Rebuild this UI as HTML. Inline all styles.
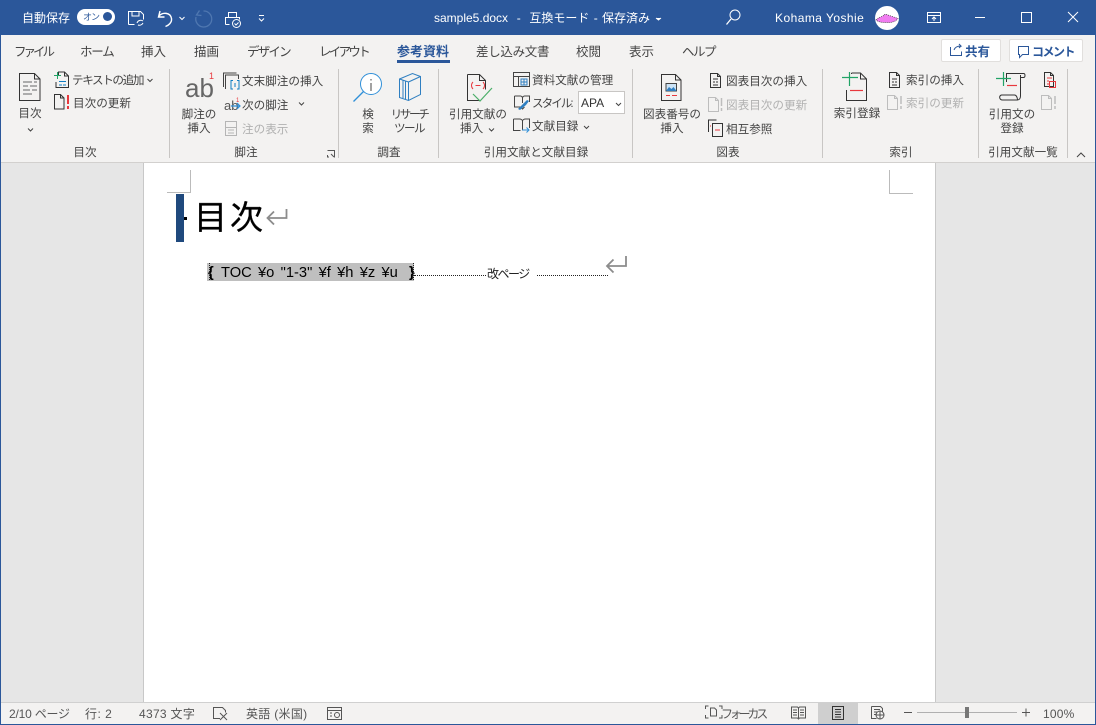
<!DOCTYPE html>
<html lang="ja"><head><meta charset="utf-8"><title>sample5.docx</title>
<style>
html,body{margin:0;padding:0}
body{width:1096px;height:725px;overflow:hidden;position:relative;background:#e6e6e6;font-family:"Liberation Sans","Noto Sans CJK JP",sans-serif;font-size:11.6px;color:#444}
div{position:absolute}
.t{white-space:nowrap;line-height:16px;height:16px}
.c{text-align:center;transform:translateX(-50%)}
.w{color:#fff;font-size:12px}
.g{color:#b1b1b1}
.k{color:#555;font-size:12px}
.b{font-size:12.5px}
svg{position:absolute;left:0;top:0}
</style></head><body>
<div style="left:0;top:0;width:1096px;height:35px;background:#2b579a"></div>
<div style="left:1px;top:35px;width:1094px;height:127px;background:#f3f2f1"></div>
<div style="left:0;top:162px;width:1096px;height:1px;background:#d2d0ce"></div>
<div style="left:143px;top:163px;width:793px;height:539px;background:#fff;border-left:1px solid #c8c8c8;border-right:1px solid #c8c8c8;box-sizing:border-box"></div>
<div style="left:1px;top:702px;width:1094px;height:22px;background:#f3f2f1;border-top:1px solid #d0d0d0;box-sizing:border-box"></div>
<div style="left:818px;top:703px;width:40px;height:21px;background:#cfcfcf"></div>
<div style="left:0;top:35px;width:1px;height:690px;background:#2b579a"></div>
<div style="left:1095px;top:35px;width:1px;height:690px;background:#2b579a"></div>
<div style="left:0;top:724px;width:1096px;height:1px;background:#2b579a"></div>

<!-- title bar text -->
<div class="t w" style="left:22px;top:10px">自動保存</div>
<div style="left:77px;top:9px;width:38px;height:16px;border-radius:8px;background:#fff"></div>
<div class="t" style="left:83px;top:9px;font-size:9px;color:#2b579a;letter-spacing:-1px">オン</div>
<div style="left:103px;top:12px;width:9px;height:9px;border-radius:50%;background:#2b579a"></div>
<div class="t w" style="left:434px;top:10px;word-spacing:1px">sample5.docx&nbsp; - &nbsp;互換モード - 保存済み</div>
<div class="t w" style="left:775px;top:10px;letter-spacing:.45px">Kohama Yoshie</div>

<!-- tabs -->
<div class="t b" style="left:14px;top:44px;letter-spacing:-3px">ファイル</div>
<div class="t b" style="left:80px;top:44px;letter-spacing:-1.2px">ホーム</div>
<div class="t b" style="left:141px;top:44px">挿入</div>
<div class="t b" style="left:194px;top:44px">描画</div>
<div class="t b" style="left:247px;top:44px;letter-spacing:-1.8px">デザイン</div>
<div class="t b" style="left:319px;top:44px;letter-spacing:-2.7px">レイアウト</div>
<div class="t" style="left:397px;top:44px;color:#2b579a;font-weight:bold;font-size:13px">参考資料</div>
<div style="left:397px;top:60px;width:53px;height:3px;background:#2b579a"></div>
<div class="t b" style="left:476px;top:44px;letter-spacing:-.3px">差し込み文書</div>
<div class="t b" style="left:576px;top:44px">校閲</div>
<div class="t b" style="left:629px;top:44px">表示</div>
<div class="t b" style="left:682px;top:44px;letter-spacing:-1.5px">ヘルプ</div>

<!-- share / comment -->
<div style="left:941px;top:39px;width:60px;height:23px;background:#fff;border:1px solid #e1dfdd;box-sizing:border-box;border-radius:2px"></div>
<div style="left:1009px;top:39px;width:74px;height:23px;background:#fff;border:1px solid #e1dfdd;box-sizing:border-box;border-radius:2px"></div>
<div class="t" style="left:965px;top:44px;color:#2b579a;font-weight:bold;font-size:12.5px">共有</div>
<div class="t" style="left:1032px;top:44px;color:#2b579a;font-weight:bold;font-size:12px;letter-spacing:-1.5px">コメント</div>

<!-- ribbon labels -->
<div class="t c" style="left:30px;top:106px">目次</div>
<div class="t" style="left:72px;top:73px;letter-spacing:-1.4px">テキストの追加</div>
<div class="t" style="left:73px;top:96px">目次の更新</div>
<div class="t c" style="left:85px;top:145px">目次</div>

<div class="t c" style="left:199px;top:107px">脚注の</div>
<div class="t c" style="left:199px;top:121px">挿入</div>
<div class="t" style="left:242px;top:74px">文末脚注の挿入</div>
<div class="t" style="left:242px;top:98px">次の脚注</div>
<div class="t g" style="left:242px;top:122px">注の表示</div>
<div class="t c" style="left:246px;top:145px">脚注</div>

<div class="t c" style="left:368px;top:107px">検</div>
<div class="t c" style="left:368px;top:121px">索</div>
<div class="t c" style="left:409px;top:107px;letter-spacing:-2.4px">リサーチ</div>
<div class="t c" style="left:409px;top:121px;letter-spacing:-1.6px">ツール</div>
<div class="t c" style="left:389px;top:145px">調査</div>

<div class="t c" style="left:478px;top:107px">引用文献の</div>
<div class="t" style="left:460px;top:121px">挿入</div>
<div class="t" style="left:532px;top:73px">資料文献の管理</div>
<div class="t" style="left:532px;top:96px;letter-spacing:-2px">スタイル:</div>
<div style="left:578px;top:91px;width:47px;height:23px;background:#fff;border:1px solid #c8c6c4;box-sizing:border-box"></div>
<div class="t" style="left:581px;top:95px;color:#333;font-size:12px">APA</div>
<div class="t" style="left:532px;top:119px">文献目録</div>
<div class="t c" style="left:536px;top:145px">引用文献と文献目録</div>

<div class="t c" style="left:672px;top:107px">図表番号の</div>
<div class="t c" style="left:672px;top:121px">挿入</div>
<div class="t" style="left:726px;top:74px">図表目次の挿入</div>
<div class="t g" style="left:726px;top:98px">図表目次の更新</div>
<div class="t" style="left:726px;top:122px">相互参照</div>
<div class="t c" style="left:728px;top:145px">図表</div>

<div class="t c" style="left:857px;top:106px">索引登録</div>
<div class="t" style="left:906px;top:73px">索引の挿入</div>
<div class="t g" style="left:906px;top:96px">索引の更新</div>
<div class="t c" style="left:901px;top:145px">索引</div>

<div class="t c" style="left:1012px;top:107px">引用文の</div>
<div class="t c" style="left:1012px;top:121px">登録</div>
<div class="t c" style="left:1023px;top:145px">引用文献一覧</div>

<!-- document -->
<div class="t" style="left:194px;top:196px;font-size:33px;line-height:44px;height:44px;color:#000;letter-spacing:3px;-webkit-text-stroke:.3px #000">目次</div>
<div style="left:207px;top:263px;width:207px;height:18px;background:#bfbfbf"></div>
<div class="t" style="left:208px;top:265px;font-size:14.7px;color:#000;font-weight:bold">{</div>
<div class="t" style="left:221px;top:265px;font-size:14.7px;color:#000;word-spacing:2.2px">TOC ¥o "1-3" ¥f ¥h ¥z ¥u</div>
<div class="t" style="left:409px;top:265px;font-size:14.7px;color:#000;font-weight:bold">}</div>
<div style="left:414px;top:275px;width:72px;height:0;border-top:1px dotted #222"></div>
<div class="t" style="left:487px;top:266px;font-size:12px;color:#222;letter-spacing:-1.5px">改ページ</div>
<div style="left:537px;top:275px;width:71px;height:0;border-top:1px dotted #222"></div>

<!-- status bar -->
<div class="t k" style="left:9px;top:706px;letter-spacing:-.2px">2/10 ページ</div>
<div class="t k" style="left:85px;top:706px;letter-spacing:.5px">行: 2</div>
<div class="t k" style="left:139px;top:706px;letter-spacing:.3px">4373 文字</div>
<div class="t k" style="left:246px;top:706px;letter-spacing:.3px">英語 (米国)</div>
<div class="t k" style="left:721px;top:706px;letter-spacing:-3.2px">フォーカス</div>
<div class="t k" style="left:1043px;top:706px;letter-spacing:.2px">100%</div>

<svg width="1096" height="725" viewBox="0 0 1096 725" fill="none" stroke-width="1">
<!-- group separators -->
<g stroke="#c8c6c4">
<path d="M169.5 69v89M338.500 69v89M438.500 69v89M632.500 69v89M822.500 69v89M978.500 69v89M1067.500 69v89"/>
</g>
<!-- QAT -->
<g stroke="#fff">
<path d="M128.500 24.500v-13h12l3 3v5M132 12v4h7v-4M128.500 24.500h6"/>
<path d="M137 23a4 4 0 0 1 6-2M143 23a4 4 0 0 1-5 2"/>
<path d="M160 11l-1.500 6 6 0M158.500 16.500c4-5 12-4 13 2 .6 4-3 7-6 8" stroke-width="1.400"/>
<path d="M179.500 17l2.500 2.500 2.500-2.500"/>
<path d="M228.500 17.500v-5h8v5M225.500 24.500v-7h14v2M225.500 24.500h4"/>
<circle cx="236.500" cy="23.500" r="4"/>
<path d="M234.500 23.500l1.500 1.500 2.500-2.500"/>
<path d="M259 15.500h5M259 18.500l2.500 2.500 2.500-2.500"/>
<path d="M656 18l2.500 2 2.500-2" fill="#fff"/>
<circle cx="735" cy="15" r="5"/>
<path d="M731 19l-4.500 5.500" stroke-width="1.300"/>
<path d="M927.500 12.500h13v10h-13zM927.500 15.500h13M934 21v-4M932 19l2-2 2 2"/>
<path d="M975 17.500h10M1021.500 12.500h10v10h-10zM1068 12l10 10M1078 12l-10 10"/>
</g>
<path d="M199.500 10.500l-3 4.500 5 .5M203.500 11a8 8 0 1 1-7.500 6" stroke="#4f77b0" stroke-width="1.300" fill="none"/>
<circle cx="887" cy="18" r="12" fill="#fff"/>
<path d="M876 20c3-3 5-3 7-4 1-2 3-2 5-1l10 3.500c-2 3-7 4.500-11 4-4 0-8 0-11-2.500z" fill="#f07cf0" stroke="#333" stroke-dasharray="1 1" stroke-width=".7"/>
<!-- share/comment icons -->
<g stroke="#2b579a">
<path d="M950.500 47v8.500h11v-4M954 50c1-3 4-4 7-4l-2-2M961 46l-2 2"/>
<path d="M1018.500 46.500h10v8h-6l-3 3v-3h-1z"/>
</g>
<!-- 目次 -->
<g stroke="#333">
<path d="M19.500 73.500h15l5.500 5.500v21.500H19.500zM34.500 73.500v5.500H40"/>
<path d="M23 82h9M34 82h3M23 86h5M30 86h7M23 90h7M32 90h5M23 94h9" stroke="#666"/>
<path d="M58.500 75v-3h6l4 4v11.500h-12.500V82M64.500 72v4h4"/>
<path d="M54.500 94.500h6l3.500 3.500v11h-9.500zM60.500 94.500v3.500H64"/>
</g>
<path d="M54 75.500h7M57.500 72v7" stroke="#21a366"/>
<path d="M59 81.500h7M59 85h3M63 85h3" stroke="#0f7dc2"/>
<path d="M68 95v9M68 106v3" stroke="#e8383d" stroke-width="2"/>
<path d="M28 128.500l2.500 2.500 2.500-2.500M147.500 79l2.500 2.500 2.500-2.500M299 102.500l2.500 2.500 2.500-2.500M489 128.500l2.500 2.500 2.500-2.500M616 103l2.500 2.500 2.500-2.500M584 126l2.500 2.500 2.500-2.500" stroke="#444"/>
<!-- ab -->
<text x="185" y="97" font-family="Liberation Sans" font-size="26" fill="#666">ab</text>
<text x="209" y="79" font-family="Liberation Sans" font-size="9" fill="#e8383d">1</text>
<text x="224" y="110" font-family="Liberation Sans" font-size="13" fill="#555">ab</text>
<text x="236" y="102" font-family="Liberation Sans" font-size="6" fill="#e8383d">1</text>
<g stroke="#444"><path d="M223.500 87v-14h13M225.500 89v-14h13v4"/></g>
<path d="M233 80.500h-2v8.500h2M237 80.500h2v8.500h-2M235 83v4" stroke="#0f7dc2"/>
<path d="M231 106h9M237 103l3 3-3 3" stroke="#2f8fd8" stroke-width="1.200"/>
<g stroke="#b5b5b5"><path d="M225.500 121.500h11v14h-11zM225.500 127.500h11M228 130h6M228 133h6"/></g>
<path d="M327.500 150.500h7v7M331 154l3 3M329 157h-1.500v-2" stroke="#555"/>
<!-- 検索 -->
<circle cx="371" cy="84" r="10.500" fill="#fff" stroke="#2f8fd8"/>
<path d="M363.500 91.500l-10 10" stroke="#2f8fd8" stroke-width="1.300"/>
<path d="M371 83v8M371 79v1.500" stroke="#444"/>
<!-- リサーチ -->
<g stroke="#2f7fc1">
<path d="M399.500 79l13-5.500 8 3v18l-12 6-9-3zM399.500 79l9 3v18M408.500 82l12-5.500"/>
<path d="M403 80v18M405.500 81v18"/>
</g>
<!-- 引用文献 -->
<g stroke="#333"><path d="M467.500 74.500h12l6 6v9M467.500 74.500v26h12M479.500 74.500v6h6"/></g>
<path d="M473 82c-2 2-2 5 0 7M483 82c2 2 2 5 0 7M475.500 85.500h5" stroke="#e8383d"/>
<path d="M473 94l7 7 12-13" stroke="#4caf6a" stroke-width="1.200"/>
<g stroke="#444"><path d="M513.500 72.500h16v14h-16zM513.500 76.500h16M518.500 76.500v10"/></g>
<path d="M521 79h6v6h-6zM521 82h6M524 79v6" stroke="#2f7fc1"/>
<g stroke="#444"><path d="M514.500 96v11h6l2 2 2-2M514.500 96h6c1 0 2 1 2 2v5M522.500 98c0-1 1-2 2-2h5v6"/></g>
<path d="M518 109l6-6 3-3 2 1-3 4-6 5z" fill="#2f7fc1"/>
<g stroke="#444"><path d="M513.500 119v11.500h7M513.500 119h6c1.500 0 3 1 3 2v9M522.500 121c0-1 1.500-2 3-2h4v9"/></g>
<path d="M522 130h7M526.500 127.500l2.500 2.500-2.500 2.500" stroke="#2f8fd8"/>
<!-- 図表番号 -->
<g stroke="#333"><path d="M661.500 74.500h14l5.500 5.500v20.500h-19.500zM675.500 74.500v5.500H681"/></g>
<path d="M666 83.500h10.500v7.500H666z" fill="#cde3f5" stroke="#444"/>
<path d="M666 91l3-4 2.500 2 2-2 3 4z" fill="#2f7fc1"/>
<path d="M666 95.500h4M672 95.500h5" stroke="#e8383d"/>
<!-- 図表目次 -->
<g stroke="#333"><path d="M710.500 73.500h7l3 3v11h-10zM717.500 73.500v3h3M713 79h5M713 82h2M716 82h2M713 85h5"/></g>
<g stroke="#bdbdbd"><path d="M708.500 97.500h7l3 3v11h-10zM715.500 97.500v3h3"/><path d="M721.500 98v8M721.500 108v3" stroke-width="1.500"/></g>
<g stroke="#333"><path d="M708.500 132v-12h8M712.500 123.500h10v13h-10z"/></g>
<path d="M715 130h5M710 126h1" stroke="#e8383d"/>
<!-- 索引登録 -->
<g stroke="#333"><path d="M846.500 90v10.500h20V79l-6-6h-9M860.500 73v6h6M851 73.500h1"/></g>
<path d="M842 77.500h16M849.500 72v14" stroke="#21a366" stroke-width="1.200"/>
<path d="M850 90.500h13" stroke="#e8383d" stroke-width="1.200"/>
<g stroke="#333"><path d="M889.500 72.500h7l3 3v12h-10zM896.500 72.500v3h3M892 79h5M892 82h2M895 82h2M892 85h5"/></g>
<g stroke="#bdbdbd"><path d="M887.500 95.500h7l3 3v11h-10zM894.500 95.500v3h3"/><path d="M901 96v8M901 106v3" stroke-width="1.500"/></g>
<!-- 引用文の登録 -->
<g stroke="#333"><path d="M1006.500 82V73.500h17c2 0 2 4 0 4h-3M1020.500 75v21c0 2-1 4-3 4h-15c-3 0-4-4-1-5h13c2 0 3 3 3 5"/></g>
<path d="M996 78.500h15M1003.500 72v14" stroke="#21a366" stroke-width="1.200"/>
<path d="M1007 85.500h10" stroke="#e8383d" stroke-width="1.200"/>
<g stroke="#333"><path d="M1044.500 72.500h6l3 3v11h-9zM1050.500 72.500v3h3"/></g>
<path d="M1049.500 81.500h6v6h-6zM1047 78h5M1047 81h2M1047 84h2" stroke="#e8383d"/>
<g stroke="#bdbdbd"><path d="M1041.500 95.500h7l3 3v11h-10zM1048.500 95.500v3h3"/><path d="M1055 96v8M1055 106v3" stroke-width="1.500"/></g>
<path d="M1077 157l4-4 4 4" stroke="#444"/>
<!-- margin marks -->
<g stroke="#bbb"><path d="M190.500 170v22.500H167M889.500 170v23.500H913"/></g>
<!-- heading bar -->
<rect x="176" y="194" width="8" height="48" fill="#1f497d"/>
<rect x="184" y="217" width="3" height="3" fill="#000"/>
<!-- para marks -->
<g stroke="#8c8c8c" stroke-width="1.800"><path d="M286.500 209v9h-19M274 211.500l-6.500 6.500 6.500 6.500"/><path d="M626 256v10h-19M613.500 259.500l-6.500 6.500 6.500 6.500"/></g>
<path d="M209.500 263v18M413.500 263v18" stroke="#222" stroke-dasharray="1 1"/>
<!-- status icons -->
<g stroke="#555">
<path d="M220 718.500h-6.500v-11h9l3 3v2"/>
<path d="M220 713l7 7M227 713l-7 7"/>
<path d="M327.500 707.500h14v12h-14zM327.500 710.500h14M330 713h2M330 716h2"/>
<circle cx="337" cy="715" r="2.500"/>
<path d="M705.500 709v-3h3M719 706h3v3M705.500 715v3h3M719 718h3v-3M710.500 708h4l2 2v6h-6z"/>
<path d="M791.500 707h6l1 1 1-1h6v11h-6l-1 1-1-1h-6zM798.500 708v10M793 710h4M793 712.500h4M793 715h4M800 710h4M800 712.500h4M800 715h4"/>
<path d="M832.500 706.500h11v13h-11zM835 709.500h6M835 712h6M835 714.500h6M835 717h6" stroke="#333"/>
<path d="M871.500 706.500h9l2 2v3M871.500 706.500v12h5M874 709.500h6M874 712h3M874 714.500h2"/>
<circle cx="880" cy="715" r="4"/>
<path d="M876 715h8M880 711v8"/>
<path d="M904 712.500h8M1022 712.500h8M1026 708.500v8"/>
<path d="M917 712.500h100" stroke="#b0b0b0"/>
</g>
<rect x="965" y="707" width="4" height="11" fill="#777"/>
</svg>
</body></html>
